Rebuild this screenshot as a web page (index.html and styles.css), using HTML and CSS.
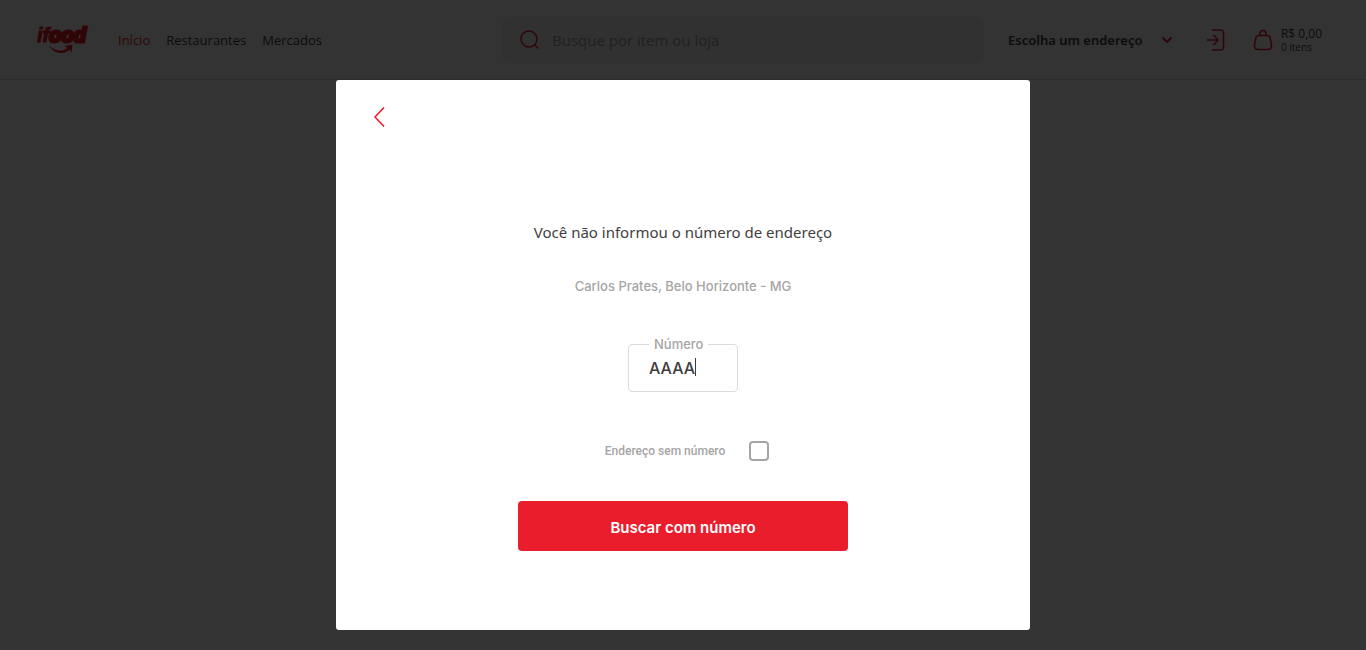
FILE: index.html
```html
<!DOCTYPE html>
<html lang="pt-BR">
<head>
<meta charset="utf-8">
<meta name="viewport" content="width=device-width, initial-scale=1">
<title>iFood</title>
<link rel="stylesheet" href="styles.css">
</head>
<body>
<header class="header">
  <div class="header-left">
    <a class="logo" href="#" aria-label="iFood">
      <svg width="53" height="30" viewBox="0 0 53 30">
        <text class="logo-text" x="0" y="17"><tspan class="logo-thin">if</tspan><tspan class="logo-thick">ood</tspan></text>
        <path d="M12 20c2 4 6 8 11.500 8c5 0 8-2 9.500-3.500l1.500 3.500 1-8.500-8 1.500 3 2c-5 4-13 3.500-18.500-3z"/>
      </svg>
    </a>
    <nav class="nav">
      <a class="nav-link nav-active" href="#">Início</a>
      <a class="nav-link" href="#">Restaurantes</a>
      <a class="nav-link" href="#">Mercados</a>
    </nav>
  </div>
  <label class="search">
    <svg class="icon" width="20" height="20" viewBox="0 0 20 20"><circle cx="9" cy="9" r="8"/><path d="M14.500 14.500l4 4"/></svg>
    <input class="search-input" type="search" placeholder="Busque por item ou loja" aria-label="Busque por item ou loja">
  </label>
  <div class="header-right">
    <button class="address" type="button">Escolha um endereço
      <svg class="icon" width="12" height="8" viewBox="0 0 12 8"><path d="M1.500 1.500L6 6l4.500-4.500"/></svg>
    </button>
    <button class="login" type="button" aria-label="Entrar">
      <svg class="icon icon-fine" width="18" height="22" viewBox="0 0 18 22"><path d="M5 1h8.500q3 0 3 3v14q0 3-3 3H5M0 11h11M6.500 6l4.500 5-4.500 5"/></svg>
    </button>
    <button class="cart" type="button">
      <svg class="icon icon-fine" width="20" height="22" viewBox="0 0 20 22"><path d="M7 6V4.500q0-3 3-3t3 3V6M6 6.500h8q2.500 0 3 2l1.500 7.500q.5 4.500-4 4.500h-9q-4.500 0-4-4.500L3 8.500q.5-2 3-2z"/></svg>
      <span class="cart-info"><span class="cart-total">R$ 0,00</span><span class="cart-count">0 itens</span></span>
    </button>
  </div>
</header>
<div class="overlay">
  <form class="modal" role="dialog" aria-modal="true" aria-labelledby="title">
    <button class="back" type="button" aria-label="Voltar">
      <svg class="icon icon-fine" width="12" height="22" viewBox="0 0 12 22"><path d="M11 1.500L2 11l9 9.500"/></svg>
    </button>
    <h1 class="title" id="title">Você não informou o número de endereço</h1>
    <p class="place">Carlos Prates, Belo Horizonte - MG</p>
    <fieldset class="field">
      <legend class="legend"><label for="number">Número</label></legend>
      <input class="number" id="number" type="text" value="AAAA">
      <span class="caret"></span>
    </fieldset>
    <label class="check">Endereço sem número <input class="box" type="checkbox"></label>
    <button class="submit" type="button">Buscar com número</button>
  </form>
</div>
</body>
</html>
```
FILE: styles.css
```css
* { box-sizing: border-box; }
body {
  margin: 0;
  color: #3f3e3e;
  background: #fff;
  font-family: "Open Sans", "Noto Sans", sans-serif;
}
button, input { font: inherit; color: inherit; }
button { padding: 0; border: 0; background: none; cursor: pointer; }
a { color: inherit; text-decoration: none; }
svg { display: block; flex: none; }
.icon { fill: none; stroke: #ea1d2c; stroke-width: 2; stroke-linejoin: round; }
.icon-fine { stroke-width: 1.6; }

.header {
  display: grid;
  grid-template-columns: 1fr minmax(0, 482px) 314px;
  align-items: center;
  gap: 24px;
  height: 80px;
  padding: 0 44px 0 37px;
  border-bottom: 1px solid #dcdcdc;
}
.header-left { display: flex; align-items: center; gap: 28px; }
.logo { fill: #ea1d2c; }
.logo-text {
  font: italic 700 20px "Liberation Sans", sans-serif;
  stroke: #ea1d2c;
}
.logo-thin { stroke-width: 1; }
.logo-thick { stroke-width: 3; }
.nav { display: flex; gap: 16px; font-size: 13px; line-height: 20px; }
.nav-active { color: #ea1d2c; }
.search {
  display: flex;
  align-items: center;
  gap: 12px;
  height: 46px;
  padding: 0 18px;
  border-radius: 8px;
  background: #f5f5f5;
}
.search .icon { stroke-width: 1.5; }
.search-input { flex: 1; min-width: 0; padding: 0; border: 0; outline: 0; background: none; font-size: 15px; }
.search-input::placeholder { color: #a6a29f; opacity: 1; }
.header-right { display: flex; align-items: center; }
.address { display: flex; align-items: center; gap: 18px; font-family: "Noto Sans", sans-serif; font-size: 13px; font-weight: 600; white-space: nowrap; }
.login { margin-left: auto; }
.cart { display: flex; align-items: center; gap: 8px; margin-left: 28px; text-align: left; }
.cart-info { display: flex; flex-direction: column; }
.cart-total { font-size: 12px; line-height: 14px; }
.cart-count { font-size: 10px; line-height: 12px; }

.overlay {
  position: fixed;
  inset: 0;
  display: flex;
  align-items: flex-start;
  justify-content: center;
  padding: 80px 20px 20px;
  overflow: auto;
  background: rgba(0, 0, 0, .8);
}
.modal {
  display: flex;
  flex-direction: column;
  align-items: center;
  width: 100%;
  max-width: 694px;
  padding: 26px 37px 79px;
  border-radius: 3px;
  background: #fff;
}
.back { align-self: flex-start; }
.title { margin: 92px 0 0; font-family: "Noto Sans", sans-serif; font-size: 15px; font-weight: 400; line-height: 24px; }
.place { margin: 32px 0 0; color: #a6a5a5; font-family: Inter, sans-serif; font-size: 13px; font-weight: 500; line-height: 20px; }
.field {
  position: relative;
  width: 110px;
  min-width: 0;
  margin: 40px 0 0;
  padding: 0 20px 8px;
  border: 1px solid #dcdcdc;
  border-radius: 4px;
}
.legend { padding: 0 5px; color: #a6a5a5; font-family: Inter, sans-serif; font-size: 13px; font-weight: 500; line-height: 16px; }
.number {
  display: block;
  width: 100%;
  height: 31px;
  padding: 0;
  border: 0;
  outline: 0;
  font-family: Inter, sans-serif;
  font-size: 16px;
  font-weight: 500;
  caret-color: transparent;
}
.caret { position: absolute; top: 6px; left: 66px; width: 1px; height: 18px; background: #3f3e3e; }
.check {
  display: flex;
  align-items: center;
  gap: 24px;
  margin: 49px 0 0 8px;
  color: #a6a5a5;
  font-family: Roboto, sans-serif;
  font-size: 12px;
  font-weight: 500;
  line-height: 20px;
}
.box {
  appearance: none;
  width: 20px;
  height: 20px;
  margin: 0;
  border: 2px solid #a6a5a5;
  border-radius: 4px;
  background: #fff;
}
.box:checked { background: #ea1d2c; }
.submit {
  width: 100%;
  max-width: 330px;
  height: 50px;
  margin-top: 40px;
  padding-top: 2px;
  border-radius: 4px;
  color: #fff;
  background: #ea1d2c;
  font-family: Inter, sans-serif;
  font-size: 15px;
  font-weight: 600;
}
```
